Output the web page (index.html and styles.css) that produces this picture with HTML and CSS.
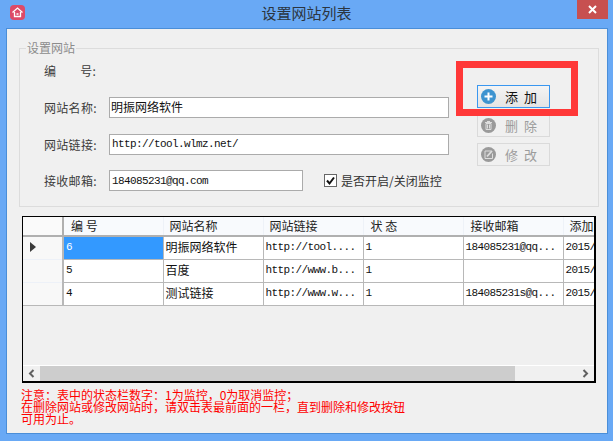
FILE: index.html
```html
<!DOCTYPE html>
<html lang="zh-CN">
<head>
<meta charset="utf-8">
<title>设置网站列表</title>
<link rel="stylesheet" href="styles.css">
</head>
<body>
<div class="window">
  <header class="titlebar">
    <svg class="app-icon" viewBox="0 0 15 15"><rect width="15" height="15" rx="4" fill="#dd4a68"/><path d="M2.500 7.500 7.500 3l5 4.500M4.500 7v4.500h6V7M6.500 9h2" fill="none" stroke="#fff" stroke-width="1.300"/></svg>
    <h1 class="title">设置网站列表</h1>
    <button class="close" type="button"><svg viewBox="0 0 9 9" width="9" height="9"><path d="M1 1l7 7M8 1 1 8" stroke="#fff" stroke-width="2"/></svg></button>
  </header>
  <main class="client">
    <fieldset class="group">
      <legend class="legend">设置网站</legend>
      <div class="form">
        <div class="fields">
          <div class="row row-id"><span class="label spaced">编<i class="gap"></i>号:</span></div>
          <div class="row"><label class="label">网站名称:</label><input class="input wide" value="明振网络软件"></div>
          <div class="row"><label class="label">网站链接:</label><input class="input wide mono" value="http://tool.wlmz.net/"></div>
          <div class="row">
            <label class="label">接收邮箱:</label><input class="input narrow mono" value="184085231@qq.com">
            <span class="check"><svg viewBox="0 0 13 13" width="13" height="13"><rect x=".5" y=".5" width="12" height="12" fill="#fff" stroke="#666"/><path d="M3 6.500l2.500 3L10 3.500" fill="none" stroke="#111" stroke-width="2"/></svg>是否开启/关闭监控</span>
          </div>
        </div>
        <div class="actions">
          <button class="btn active" type="button">
            <svg viewBox="0 0 15 15" width="15" height="15"><circle cx="7.500" cy="7.500" r="7.500" fill="#3e94d0"/><path d="M7.500 3.500v8M3.500 7.500h8" stroke="#fff" stroke-width="2"/></svg><span>添 加</span>
          </button>
          <button class="btn" type="button">
            <svg viewBox="0 0 15 15" width="15" height="15"><circle cx="7.500" cy="7.500" r="7.500" fill="#9a9a9a"/><path d="M4 4.500h7M5 5.500h5v6H5zM6 3.500h3" fill="none" stroke="#dedede"/><path d="M6.500 6.500v4M8.500 6.500v4" stroke="#dedede"/></svg><span>删 除</span>
          </button>
          <button class="btn" type="button">
            <svg viewBox="0 0 15 15" width="15" height="15"><circle cx="7.500" cy="7.500" r="7.500" fill="#9a9a9a"/><path d="M10.500 4H4v7.500h7.500V6.500" fill="none" stroke="#dedede"/><path d="M6 9.500 11 4" stroke="#dedede" stroke-width="1.800"/></svg><span>修 改</span>
          </button>
        </div>
      </div>
    </fieldset>

    <section class="grid">
      <div class="grid-view">
        <table class="table">
          <colgroup><col class="c0"><col class="c"><col class="c"><col class="c"><col class="c"><col class="c"><col class="c"></colgroup>
          <thead>
            <tr><th class="head-row"></th><th class="ind">编 号</th><th>网站名称</th><th>网站链接</th><th class="ind">状 态</th><th class="ind">接收邮箱</th><th>添加时间</th></tr>
          </thead>
          <tbody>
            <tr><td class="head-row"><span class="arrow"></span></td><td class="selected num">6</td><td>明振网络软件</td><td class="mono">http://tool....</td><td class="num">1</td><td class="mono">184085231@qq...</td><td class="num">2015/1/1</td></tr>
            <tr><td class="head-row"></td><td class="num">5</td><td>百度</td><td class="mono">http://www.b...</td><td class="num">1</td><td></td><td class="num">2015/1/1</td></tr>
            <tr><td class="head-row"></td><td class="num">4</td><td>测试链接</td><td class="mono">http://www.w...</td><td class="num">1</td><td class="mono">184085231s@q...</td><td class="num">2015/1/1</td></tr>
          </tbody>
        </table>
      </div>
      <div class="scrollbar">
        <svg viewBox="0 0 7 9" width="7" height="9"><path d="M5.500 1 2 4.500 5.500 8" fill="none" stroke="#606060" stroke-width="2"/></svg>
        <div class="thumb"></div>
        <svg viewBox="0 0 7 9" width="7" height="9"><path d="M1.500 1 5 4.500 1.500 8" fill="none" stroke="#606060" stroke-width="2"/></svg>
      </div>
    </section>

    <p class="note">注意：表中的状态栏数字：1为监控，0为取消监控；<br>在删除网站或修改网站时，请双击表最前面的一栏，直到删除和修改按钮<br>可用为止。</p>
  </main>
  <div class="highlight"></div>
</div>
</body>
</html>
```
FILE: styles.css
```css
* { box-sizing: border-box; }
html, body { margin: 0; height: 100%; }
body { background: #69a9f5; font-family: "Noto Sans CJK SC", "Liberation Sans", sans-serif; font-size: 12px; color: #333; overflow: hidden; }
.window { position: relative; width: 613px; height: 441px; display: flex; flex-direction: column; padding: 0 5px 7px 6px; }

.titlebar { height: 28px; flex: none; display: flex; align-items: flex-start; margin: 0 -5px 0 -6px; padding-left: 10px; position: relative; }
.app-icon { width: 15px; height: 15px; margin-top: 5px; }
.title { position: absolute; left: 0; right: 0; top: 3px; margin: 0; text-align: center; font-size: 15px; line-height: 20px; font-weight: 400; color: #2b3540; }
.close { position: absolute; left: 577px; top: 0; width: 31px; height: 19px; padding: 0; border: 0; background: #c75050; display: flex; align-items: center; justify-content: center; }

.client { flex: 1; background: #f0f0f0; border: 1px solid #4a8ed8; padding: 12px 0 0 12px; display: flex; flex-direction: column; min-height: 0; }

.group { margin: 0 8px 0 0; padding: 0; height: 166px; flex: none; border: 1px solid #dcdcdc; min-width: 0; }
.legend { margin-left: 6px; padding: 0 1px; font-size: 12px; line-height: 14px; color: #8c8c8c; }

.form { display: flex; position: relative; padding: 0 0 0 24px; }
.fields { width: 429px; padding-top: 5px; }
.row { display: flex; align-items: center; height: 21px; margin-bottom: 15.500px; }
.row-id { height: 21px; margin-bottom: 16px; }
.label { width: 65px; flex: none; color: #3c3c3c; font-size: 12px; letter-spacing: .3px; }
.gap { display: inline-block; width: 24px; }
.input { height: 21px; padding: 0 1px 2px; border: 1px solid #ababab; background: #fff; color: #111; font-family: "Noto Sans CJK SC", sans-serif; font-size: 12px; outline: 0; border-radius: 0; }
.wide { width: 340px; }
.narrow { width: 194px; }
.input.mono { font-family: "Liberation Mono", monospace; font-size: 11px; letter-spacing: -.6px; padding: 0 2px; }
.check { display: flex; align-items: center; gap: 4px; margin-left: 21px; color: #333; }

.actions { display: flex; flex-direction: column; gap: 6px; margin: 30px 0 0 4px; }
.btn { width: 73px; height: 23px; padding: 0 0 0 3px; display: flex; align-items: center; border: 1px solid #dadada; background: #f0f0f0; color: #9c9c9c; font-family: "Noto Sans CJK SC", sans-serif; font-size: 13px; }
.btn span { margin-left: 9px; letter-spacing: 1.500px; }
.btn.active { border-color: #3a97f0; background: linear-gradient(#f4f4f4, #e4e4e4); color: #111; }

.grid { margin: 9px 0 0 3px; width: 574px; height: 167px; flex: none; border: 1px solid #000; border-width: 1px 2px 2px 1px; display: flex; flex-direction: column; }
.grid-view { flex: 1; overflow: hidden; min-height: 0; }
.table { border-collapse: collapse; table-layout: fixed; width: 640px; }
.c0 { width: 40px; }
.c { width: 100px; }
th { height: 19px; padding: 0 0 0 6px; background: #f8fafd; border-right: 1px solid #eef2f8; border-bottom: 2px solid #b0b0b0; font-weight: 400; font-size: 12px; line-height: 16px; text-align: left; color: #222; white-space: nowrap; overflow: hidden; }
th.ind { padding-left: 7px; }
td { height: 23px; padding: 0 2px 1px; background: #fff; border: 1px solid #b8b8b8; border-top: 0; font-size: 12px; line-height: 16px; color: #111; white-space: nowrap; overflow: hidden; }
tbody td:first-child { border-left: 0; }
td.head-row { background: #f8f8f8; border: 0; border-right: 2px solid #b8b8b8; border-bottom: 1px solid #edf1f8; text-align: left; padding-left: 7px; }
tr:last-child td.head-row { border-bottom: 1px solid #b8b8b8; }
th.head-row { border-right: 2px solid #b0b0b0; background: #fafafa; }
td.mono, td.num { font-family: "Liberation Mono", monospace; font-size: 11px; letter-spacing: -.6px; }
td.selected { background: #3399ff; color: #fff; }
.arrow { display: block; width: 0; height: 0; border-style: solid; border-width: 5px 0 5px 6px; border-color: transparent transparent transparent #3a3a3a; }

.scrollbar { height: 16px; flex: none; display: flex; align-items: center; border-top: 1px solid #fff; background: #f0f0f0; padding: 0 5px; }
.thumb { width: 475px; height: 15px; margin-left: 5px; background: #cdcdcd; }
.scrollbar svg:last-child { margin-left: auto; }

.note { margin: 6px 0 0 2px; color: #f00; font-size: 12px; line-height: 12px; }

.highlight { position: absolute; left: 456px; top: 61px; width: 122px; height: 55px; border: 7px solid #ff3838; }
```
